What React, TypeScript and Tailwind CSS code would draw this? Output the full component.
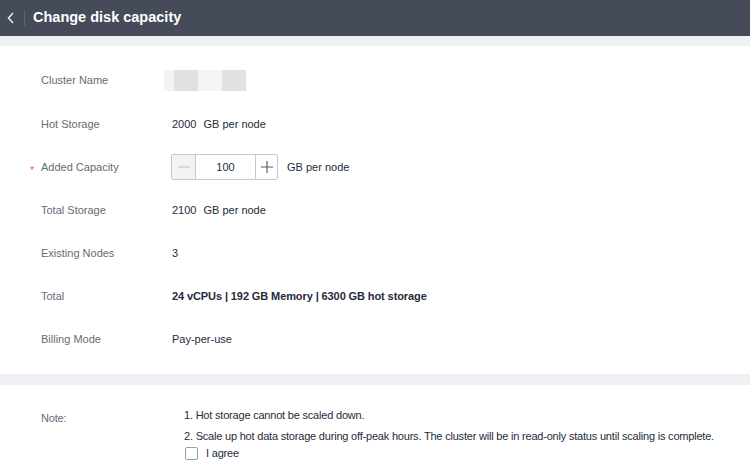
import React from 'react';

const Row: React.FC<{ label: React.ReactNode; children: React.ReactNode }> = ({ label, children }) => (
    <div className="flex items-center h-[43.2px]">
        <div className="w-[131px] text-[#666b75]">{label}</div>
        <div className="text-[#252b3a] flex items-center">{children}</div>
    </div>
);

const App: React.FC = () => {
    return (
        <div className="w-[750px] h-[468px] bg-white overflow-hidden text-[11px]" style={{ fontFamily: '"Liberation Sans", Arial, sans-serif' }}>
            <header className="h-[36px] bg-[#464b59] flex items-center">
                <svg className="ml-[6px]" width="10" height="14" viewBox="0 0 10 14" fill="none">
                    <path d="M7 2L2.5 7L7 12" stroke="#e6e8ee" strokeWidth="1.6" />
                </svg>
                <div className="ml-[8px] w-px h-[16px] bg-[#5f6472]" />
                <h1 className="ml-[8px] text-[14.5px] font-bold text-white">Change disk capacity</h1>
            </header>
            <div className="h-[10px] bg-[#eff0f4]" />
            <section className="pt-[13px] pb-[13px] pl-[41px] bg-white">
                <Row label="Cluster Name">
                    <div className="flex h-[21px] -ml-[8px]">
                        <div className="w-[10px] bg-[#f3f3f3]" />
                        <div className="w-[24px] bg-[#e0e1e3]" />
                        <div className="w-[24px] bg-[#f3f4f4]" />
                        <div className="w-[24px] bg-[#e0e1e3]" />
                    </div>
                </Row>
                <Row label="Hot Storage">
                    <span>2000</span>
                    <span className="ml-[7px]">GB per node</span>
                </Row>
                <Row
                    label={
                        <span className="relative">
                            <span className="absolute -left-[11px] top-[1px] text-[#f5605a]">*</span>
                            Added Capacity
                        </span>
                    }
                >
                    <div className="flex items-center -ml-px">
                        <div className="flex h-[26px] border border-[#c5c8cf] rounded-[2px] overflow-hidden">
                            <div className="w-[24px] bg-[#f3f3f3] border-r border-[#c5c8cf] flex items-center justify-center">
                                <svg width="12" height="12" viewBox="0 0 12 12">
                                    <path d="M0 6H12" stroke="#b8bbc2" strokeWidth="1.2" />
                                </svg>
                            </div>
                            <div className="w-[59px] flex items-center justify-center text-[#252b3a]">100</div>
                            <div className="w-[22px] border-l border-[#c5c8cf] flex items-center justify-center">
                                <svg width="12" height="12" viewBox="0 0 12 12">
                                    <path d="M0 6H12M6 0V12" stroke="#575d6c" strokeWidth="1.2" />
                                </svg>
                            </div>
                        </div>
                        <span className="ml-[9px]">GB per node</span>
                    </div>
                </Row>
                <Row label="Total Storage">
                    <span>2100</span>
                    <span className="ml-[7px]">GB per node</span>
                </Row>
                <Row label="Existing Nodes">3</Row>
                <Row label="Total">
                    <span className="font-bold tracking-[-0.1px]">24 vCPUs | 192 GB Memory | 6300 GB hot storage</span>
                </Row>
                <Row label="Billing Mode">Pay-per-use</Row>
            </section>
            <div className="h-[11px] bg-[#eff0f4]" />
            <section className="pt-[20px] pl-[41px] flex">
                <div className="w-[131px] text-[#666b75] pt-[5px] tracking-[-0.2px]">Note:</div>
                <div className="ml-[12px] text-[#252b3a] tracking-[-0.2px]">
                    <p className="leading-[21px]">1. Hot storage cannot be scaled down.</p>
                    <p className="leading-[21px]">2. Scale up hot data storage during off-peak hours. The cluster will be in read-only status until scaling is complete.</p>
                    <label className="flex items-center ml-px -mt-[2px]">
                        <span className="w-[13px] h-[13px] border border-[#9a9ea8] rounded-[2px] bg-white" />
                        <span className="ml-[8px]">I agree</span>
                    </label>
                </div>
            </section>
        </div>
    );
};

export default App;
